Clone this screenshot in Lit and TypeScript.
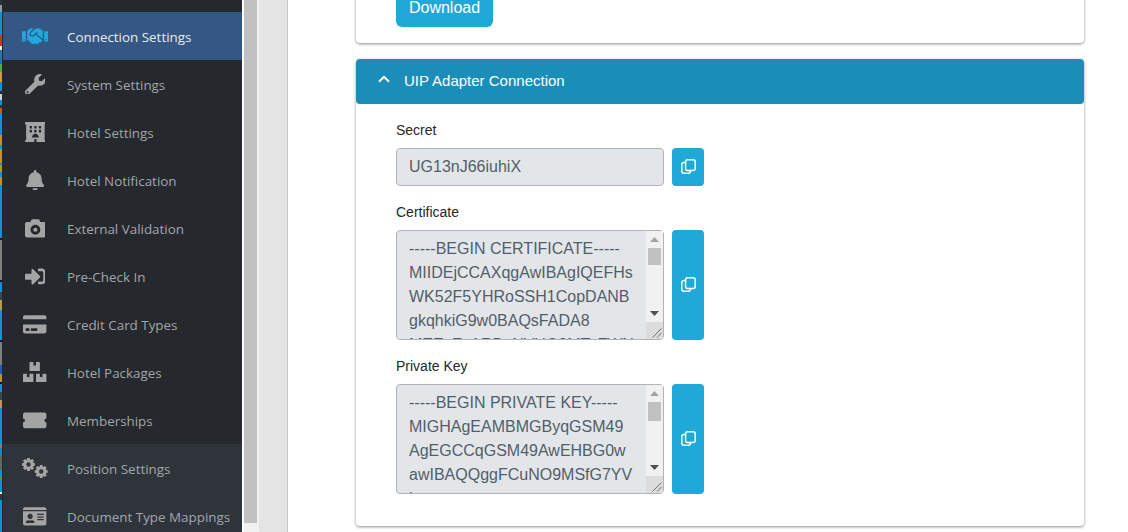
import { LitElement, html, css, svg } from "lit";
import { customElement } from "lit/decorators.js";

function gear(cx: number, cy: number, r: number, hole: number, teeth = 8): string {
  const pts: string[] = [];
  const rIn = r * 0.74;
  for (let i = 0; i < teeth; i++) {
    const a = (i / teeth) * Math.PI * 2 - Math.PI / 2;
    const s = (Math.PI / teeth) * 0.5;
    const o = (Math.PI / teeth) * 0.72;
    const list: [number, number][] = [
      [rIn, a - o * 1.25],
      [r, a - s],
      [r, a + s],
      [rIn, a + o * 1.25],
    ];
    for (const [rad, ang] of list) {
      pts.push(`${(cx + rad * Math.cos(ang)).toFixed(2)} ${(cy + rad * Math.sin(ang)).toFixed(2)}`);
    }
  }
  const ring = `M${cx - hole} ${cy}a${hole} ${hole} 0 1 0 ${hole * 2} 0a${hole} ${hole} 0 1 0 ${-hole * 2} 0z`;
  return `M${pts.join("L")}z${ring}`;
}

type Item = { label: string; vb: string; w: number; h?: number; d: string; cls?: string };

const ITEMS: Item[] = [
  { label: "Connection Settings", cls: "active", vb: "0 0 640 512", w: 26, d: "M434.7 64h-85.9c-8 0-15.7 3-21.6 8.4l-98.3 90c-.1.1-.2.3-.3.4-16.6 15.6-16.3 40.5-2.1 56 12.7 13.9 39.4 17.6 56.1 2.7.1-.1.3-.1.4-.2l79.9-73.2c6.5-5.9 16.7-5.5 22.6 1 6 6.5 5.5 16.6-1 22.6l-26.1 23.9L504 313.8c2.9 2.4 5.5 5 7.9 7.7V128l-54.6-54.6c-5.9-6-14.1-9.4-22.6-9.4zM544 128.2v223.9c0 17.7 14.3 32 32 32h64V128.2h-96zm48 223.9c-8.8 0-16-7.2-16-16s7.2-16 16-16 16 7.2 16 16-7.2 16-16 16zM0 384h64c17.7 0 32-14.3 32-32V128.2H0V384zm48-63.9c8.8 0 16 7.2 16 16s-7.2 16-16 16-16-7.2-16-16c0-8.9 7.2-16 16-16zm435.9 18.6L334.6 217.5l-30 27.5c-29.7 27.1-75.2 24.5-101.7-4.4-26.9-29.4-24.8-74.9 4.4-101.7L289.1 64h-83.8c-8.5 0-16.6 3.4-22.6 9.4L128 128v223.9h18.3l90.5 81.9c27.4 22.3 67.7 18.1 90-9.3l.2-.2 17.9 15.5c15.9 13 39.4 10.5 52.3-5.4l31.4-38.6 5.4 4.4c13.7 11.1 33.9 9.1 45-4.7l9.5-11.7c11.2-13.8 9.1-33.9-4.6-45.1z" },
  { label: "System Settings", vb: "0 0 512 512", w: 20.8, d: "M507.73 109.1c-2.24-9.03-13.54-12.09-20.12-5.51l-74.36 74.36-67.88-11.31-11.31-67.88 74.36-74.36c6.62-6.62 3.43-17.9-5.66-20.16-47.38-11.74-99.55.91-136.58 37.93-39.64 39.64-50.55 97.1-34.05 147.2L18.74 402.76c-24.99 24.99-24.99 65.51 0 90.5 24.99 24.99 65.51 24.99 90.5 0l213.21-213.21c50.12 16.71 107.47 5.68 147.37-34.22 37.07-37.07 49.7-89.32 37.91-136.73zM64 472c-13.25 0-24-10.75-24-24 0-13.26 10.75-24 24-24s24 10.74 24 24c0 13.25-10.75 24-24 24z" },
  { label: "Hotel Settings", vb: "0 0 576 512", w: 20.8, h: 20.8, d: "M560 64c8.84 0 16-7.16 16-16V16c0-8.84-7.16-16-16-16H16C7.16 0 0 7.16 0 16v32c0 8.84 7.16 16 16 16h15.98v384H16c-8.84 0-16 7.16-16 16v32c0 8.84 7.16 16 16 16h240v-80c0-8.8 7.2-16 16-16h32c8.8 0 16 7.2 16 16v80h240c8.84 0 16-7.16 16-16v-32c0-8.84-7.16-16-16-16h-16V64h16zM256 108.8c0-6.4 6.4-12.8 12.8-12.8h38.4c6.4 0 12.8 6.4 12.8 12.8v38.4c0 6.4-6.4 12.8-12.8 12.8h-38.4c-6.4 0-12.8-6.4-12.8-12.8v-38.4zm0 96c0-6.4 6.4-12.8 12.8-12.8h38.4c6.4 0 12.8 6.4 12.8 12.8v38.4c0 6.4-6.4 12.8-12.8 12.8h-38.4c-6.4 0-12.8-6.4-12.8-12.8v-38.4zm-128-96c0-6.4 6.4-12.8 12.8-12.8h38.4c6.4 0 12.8 6.4 12.8 12.8v38.4c0 6.4-6.4 12.8-12.8 12.8h-38.4c-6.4 0-12.8-6.4-12.8-12.8v-38.4zM179.2 256h-38.4c-6.4 0-12.8-6.4-12.8-12.8v-38.4c0-6.4 6.4-12.8 12.8-12.8h38.4c6.4 0 12.8 6.4 12.8 12.8v38.4c0 6.4-6.4 12.8-12.8 12.8zM192 384c0-53.02 42.98-96 96-96s96 42.98 96 96H192zm256-140.8c0 6.4-6.4 12.8-12.8 12.8h-38.4c-6.4 0-12.8-6.4-12.8-12.8v-38.4c0-6.4 6.4-12.8 12.8-12.8h38.4c6.4 0 12.8 6.4 12.8 12.8v38.4zm0-96c0 6.4-6.4 12.8-12.8 12.8h-38.4c-6.4 0-12.8-6.4-12.8-12.8v-38.4c0-6.4 6.4-12.8 12.8-12.8h38.4c6.4 0 12.8 6.4 12.8 12.8v38.4z" },
  { label: "Hotel Notification", vb: "0 0 448 512", w: 18.2, d: "M224 512c35.32 0 63.97-28.65 63.97-64H160.03c0 35.35 28.65 64 63.97 64zm215.39-149.71c-19.32-20.76-55.47-51.99-55.47-154.29 0-77.7-54.48-139.9-127.94-155.16V32c0-17.67-14.32-32-31.98-32s-31.98 14.33-31.98 32v20.84C118.56 68.1 64.08 130.3 64.08 208c0 102.3-36.15 133.53-55.47 154.29-6 6.45-8.66 14.16-8.61 21.71.11 16.4 12.98 32 32.1 32h383.8c19.12 0 32-15.6 32.1-32 .05-7.55-2.61-15.27-8.61-21.71z" },
  { label: "External Validation", vb: "0 0 512 512", w: 20.8, d: "M512 144v288c0 26.5-21.5 48-48 48H48c-26.5 0-48-21.5-48-48V144c0-26.5 21.5-48 48-48h88l12.3-32.9c7-18.7 24.9-31.1 44.9-31.1h125.5c20 0 37.9 12.4 44.9 31.1L376 96h88c26.5 0 48 21.5 48 48zM376 288c0-66.2-53.8-120-120-120s-120 53.8-120 120 53.8 120 120 120 120-53.8 120-120zm-70 0c0 27.6-22.4 50-50 50s-50-22.4-50-50 22.4-50 50-50 50 22.4 50 50z" },
  { label: "Pre-Check In", vb: "0 0 512 512", w: 20.8, d: "M416 448h-84c-6.6 0-12-5.4-12-12v-40c0-6.6 5.4-12 12-12h84c17.7 0 32-14.3 32-32V160c0-17.7-14.3-32-32-32h-84c-6.6 0-12-5.4-12-12V76c0-6.6 5.4-12 12-12h84c53 0 96 43 96 96v192c0 53-43 96-96 96zm-47-201L201 79c-15-15-41-4.5-41 17v96H24c-13.3 0-24 10.7-24 24v96c0 13.3 10.7 24 24 24h136v96c0 21.5 26 32 41 17l168-168c9.3-9.4 9.3-24.6 0-34z" },
  { label: "Credit Card Types", vb: "0 0 576 512", w: 23.4, d: "M0 432c0 26.5 21.5 48 48 48h480c26.5 0 48-21.5 48-48V256H0v176zm192-68c0-6.6 5.4-12 12-12h136c6.6 0 12 5.4 12 12v40c0 6.6-5.4 12-12 12H204c-6.6 0-12-5.4-12-12v-40zm-128 0c0-6.6 5.4-12 12-12h72c6.6 0 12 5.4 12 12v40c0 6.6-5.4 12-12 12H76c-6.6 0-12-5.4-12-12v-40zM576 80v48H0V80c0-26.5 21.5-48 48-48h480c26.5 0 48 21.5 48 48z" },
  { label: "Hotel Packages", vb: "0 0 576 512", w: 23.4, d: "M560 288h-80v96l-32-21.3-32 21.3v-96h-80c-8.8 0-16 7.2-16 16v192c0 8.8 7.2 16 16 16h224c8.8 0 16-7.2 16-16V304c0-8.8-7.2-16-16-16zm-384-64h224c8.8 0 16-7.2 16-16V16c0-8.8-7.2-16-16-16h-80v96l-32-21.3L256 96V0h-80c-8.8 0-16 7.2-16 16v192c0 8.8 7.2 16 16 16zm64 64h-80v96l-32-21.3L96 384v-96H16c-8.8 0-16 7.2-16 16v192c0 8.8 7.2 16 16 16h224c8.8 0 16-7.2 16-16V304c0-8.8-7.2-16-16-16z" },
  { label: "Memberships", vb: "0 0 576 512", w: 23.4, d: "M48 64h480c26.5 0 48 21.5 48 48v96c-26.5 0-48 21.5-48 48s21.5 48 48 48v96c0 26.5-21.5 48-48 48H48c-26.5 0-48-21.5-48-48v-96c26.5 0 48-21.5 48-48s-21.5-48-48-48v-96c0-26.5 21.5-48 48-48z" },
  { label: "Position Settings", cls: "alt", vb: "0 0 26 20", w: 26, h: 20, d: gear(6.5, 6.5, 6.6, 2.2) + gear(19.2, 13.5, 6.6, 2.2) },
  { label: "Document Type Mappings", cls: "alt", vb: "0 0 576 512", w: 23.4, d: "M528 32H48C21.5 32 0 53.5 0 80v16h576V80c0-26.5-21.5-48-48-48zM0 432c0 26.5 21.5 48 48 48h480c26.5 0 48-21.5 48-48V128H0v304zm352-232c0-4.4 3.6-8 8-8h144c4.4 0 8 3.6 8 8v16c0 4.4-3.6 8-8 8H360c-4.4 0-8-3.6-8-8v-16zm0 64c0-4.4 3.6-8 8-8h144c4.4 0 8 3.6 8 8v16c0 4.4-3.6 8-8 8H360c-4.4 0-8-3.6-8-8v-16zm0 64c0-4.4 3.6-8 8-8h144c4.4 0 8 3.6 8 8v16c0 4.4-3.6 8-8 8H360c-4.4 0-8-3.6-8-8v-16zM176 192c35.3 0 64 28.7 64 64s-28.7 64-64 64-64-28.7-64-64 28.7-64 64-64zM67.1 396.2C75.5 370.5 99.6 352 128 352h8.2c12.3 5.1 25.7 8 39.8 8s27.6-2.9 39.8-8h8.2c28.4 0 52.5 18.5 60.9 44.2 3.2 9.9-5.2 19.8-15.6 19.8H82.7c-10.4 0-18.8-10-15.6-19.8z" },
];

const CERT = [
  "-----BEGIN CERTIFICATE-----",
  "MIIDEjCCAXqgAwIBAgIQEFHs",
  "WK52F5YHRoSSH1CopDANB",
  "gkqhkiG9w0BAQsFADA8",
  "MEExEzARBgNVHG2MTyFWN",
].join("\n");

const KEY = [
  "-----BEGIN PRIVATE KEY-----",
  "MIGHAgEAMBMGByqGSM49",
  "AgEGCCqGSM49AwEHBG0w",
  "awIBAQQggFCuNO9MSfG7YV",
  "i",
].join("\n");

@customElement("app-root")
export class AppRoot extends LitElement {
  static styles = css`
    :host {
      display: flex;
      width: 1128px;
      height: 532px;
      overflow: hidden;
      background: #fff;
      font-family: "Liberation Sans", Arial, sans-serif;
      color: #23282c;
    }
    .strip {
      flex: 0 0 3px;
      background:
        linear-gradient(to right, transparent 0 2.4px, #25282d 2.4px),
        linear-gradient(
        to bottom,
        #2b3138 0 5px, #8f9aa5 5px 12px, #0a96d6 12px 35px, #c0392b 35px 46px, #e8e8e8 46px 50px,
        #2b6fc0 50px 64px, #5aa84a 64px 72px, #c9a227 72px 82px, #0a96d6 82px 91px, #2c2c2c 91px 94px,
        #d0d0d0 94px 100px, #0a96d6 100px 105px, #3a2f3a 105px 108px, #b8651d 108px 113px,
        #0a96d6 113px 135px, #c2941c 135px 145px, #0a96d6 145px 149px, #c2941c 149px 163px,
        #0a96d6 163px 165px, #c2941c 165px 172px, #0a96d6 172px 177px, #c2941c 177px 185px,
        #0a96d6 185px 238px, #111 238px 240px, #7f7f7f 240px 280px, #111 280px 282px,
        #0a96d6 282px 292px, #3d4650 292px 300px, #b89a4a 300px 310px, #0a96d6 310px 340px,
        #111 340px 342px, #7f7f7f 342px 365px, #1d5fb0 365px 374px, #b8923a 374px 382px, #111 382px 384px,
        #0a96d6 384px 392px, #3d4650 392px 400px, #b89a4a 400px 408px, #0a96d6 408px 444px,
        #7f7f7f 444px 448px, #1b84c4 448px 456px, #5d6a5e 456px 470px, #0a96d6 470px 476px,
        #4f9a55 476px 480px, #0a96d6 480px 492px, #e8e8e8 492px 494px, #2c3a48 494px 500px,
        #0a96d6 500px 532px
      );
    }
    .sidebar {
      flex: 0 0 239px;
      display: flex;
      flex-direction: column;
      background: #25282d;
      padding-top: 12px;
      overflow: hidden;
    }
    .row {
      flex: 0 0 48px;
      display: flex;
      align-items: center;
      padding-left: 19px;
      gap: 19px;
      font-family: "Open Sans", sans-serif;
      font-size: 13.4px;
      color: #a3a6a9;
      white-space: nowrap;
    }
    .row .txt { padding-top: 2px; }
    .row .ico {
      flex: 0 0 26px;
      display: flex;
      justify-content: center;
      align-items: center;
      color: #a4a4a4;
    }
    .row svg { display: block; fill: currentColor; }
    .row.active { background: #345783; color: #e6edf5; }
    .row.active .ico { color: #1fa9e0; }
    .row.alt { background: #2f343b; }
    .gutter { flex: 0 0 2px; background: #fff; }
    .vscroll {
      flex: 0 0 15px;
      background: #f1f1f1;
      display: flex;
      align-items: flex-start;
    }
    .vthumb { width: 13px; height: 523px; background: #c1c1c1; }
    .band {
      flex: 0 0 29px;
      box-sizing: border-box;
      background: #e4e4e4;
      border-right: 1px solid #c8c8c8;
    }
    .main {
      flex: 1;
      min-width: 0;
      padding: 0 44px 0 68px;
      overflow: hidden;
      background: #fff;
    }
    .card {
      background: #fff;
      border-radius: 4px;
      box-shadow: 0 1px 3px rgba(0, 0, 0, 0.45);
    }
    .card.first {
      margin-top: -30px;
      margin-bottom: 16px;
      padding: 19px 40px 16px;
    }
    .download {
      display: block;
      width: 97px;
      height: 38px;
      box-sizing: border-box;
      border: none;
      border-radius: 6px;
      background: #20a8d8;
      color: #fff;
      font: 16px "Liberation Sans", Arial, sans-serif;
      padding: 0;
    }
    .head {
      height: 45px;
      display: flex;
      align-items: center;
      gap: 14px;
      padding-left: 22px;
      background: #1a8db8;
      color: #fff;
      font-size: 15px;
      border-radius: 4px;
    }
    .head svg { display: block; margin-bottom: 6px; }
    .head span { margin-bottom: 2px; }
    .body { padding: 16px 40px 32px; }
    .group { margin-bottom: 16px; }
    .group:last-child { margin-bottom: 0; }
    label {
      display: block;
      font-size: 14px;
      line-height: 20px;
      margin-bottom: 8px;
    }
    .line { display: flex; gap: 8px; }
    .field {
      width: 268px;
      box-sizing: border-box;
      border: 1px solid #aeb4ba;
      border-radius: 4px;
      background: #e3e6e9;
      color: #525e69;
      font: 16px/24px "Liberation Sans", Arial, sans-serif;
      padding: 6px 12px;
      margin: 0;
      outline: none;
    }
    input.field { height: 38px; }
    .ta { position: relative; width: 268px; height: 110px; }
    textarea.field {
      height: 110px;
      display: block;
      resize: none;
      overflow: hidden;
      padding-right: 29px;
    }
    .sb {
      position: absolute;
      top: 1px;
      right: 1px;
      bottom: 1px;
      width: 17px;
      display: flex;
      flex-direction: column;
      background: #f1f1f1;
    }
    .sb .btn {
      flex: 0 0 17px;
      display: flex;
      align-items: center;
      justify-content: center;
    }
    .sb .btn svg, .sb .corner svg { display: block; }
    .sb .track { flex: 1; display: flex; justify-content: center; }
    .sb .thumb { width: 13px; background: #c1c1c1; }
    .sb .corner { flex: 0 0 17px; background: #dcdcdc; }
    .copy {
      flex: 0 0 32px;
      width: 32px;
      display: flex;
      align-items: center;
      justify-content: center;
      padding: 0;
      border: none;
      border-radius: 4px;
      background: #20a8d8;
      color: #fff;
    }
    .copy svg { display: block; margin-bottom: 2px; }
  `;

  private copyIcon() {
    return html`<button class="copy" aria-label="Copy">
      <svg width="15" height="15" viewBox="0 0 15 15" fill="none" stroke="#fff" stroke-width="1.5">
        <rect x="4.6" y=".8" width="9.6" height="10.6" rx="2" />
        <path d="M4.6 3.6H2.6A1.8 1.8 0 0 0 .8 5.4v7a1.8 1.8 0 0 0 1.8 1.8h5a1.8 1.8 0 0 0 1.8-1.8v-1" />
      </svg>
    </button>`;
  }

  private area(text: string, thumb: number) {
    return html`<div class="ta">
      <textarea class="field" readonly .value=${text}></textarea>
      <div class="sb" aria-hidden="true">
        <div class="btn">
          <svg width="9" height="5" viewBox="0 0 9 5"><path d="M4.5 0L9 5H0z" fill="#a3a3a3" /></svg>
        </div>
        <div class="track"><div class="thumb" style="height:${thumb}px"></div></div>
        <div class="btn">
          <svg width="9" height="5" viewBox="0 0 9 5"><path d="M0 0h9L4.5 5z" fill="#505050" /></svg>
        </div>
        <div class="corner">
          <svg width="17" height="17" viewBox="0 0 17 17" fill="none" stroke="#707070" stroke-width="1">
            <path d="M15.5 6.5L6.5 15.5M15.5 11L11 15.5" />
          </svg>
        </div>
      </div>
    </div>`;
  }

  render() {
    return html`
      <div class="strip"></div>
      <nav class="sidebar">
        ${ITEMS.map(
          (it) => html`<div class="row ${it.cls ?? ""}">
            <span class="ico">
              <svg
                viewBox=${it.vb}
                width=${it.w}
                height=${it.h ?? 20.8}
                preserveAspectRatio=${it.h ? "none" : "xMidYMid meet"}
                fill-rule="evenodd"
              >${svg`<path d=${it.d} />`}</svg>
            </span>
            <span class="txt">${it.label}</span>
          </div>`
        )}
      </nav>
      <div class="gutter"></div>
      <div class="vscroll"><div class="vthumb"></div></div>
      <div class="band"></div>
      <main class="main">
        <section class="card first">
          <button class="download">Download</button>
        </section>
        <section class="card">
          <header class="head">
            <svg width="12" height="8" viewBox="0 0 12 8" fill="none" stroke="#fff" stroke-width="2">
              <path d="M1 6.8L6 1.8L11 6.8" />
            </svg>
            <span>UIP Adapter Connection</span>
          </header>
          <div class="body">
            <div class="group">
              <label>Secret</label>
              <div class="line">
                <input class="field" readonly .value=${"UG13nJ66iuhiX"} />
                ${this.copyIcon()}
              </div>
            </div>
            <div class="group">
              <label>Certificate</label>
              <div class="line">
                ${this.area(CERT, 17)}
                ${this.copyIcon()}
              </div>
            </div>
            <div class="group">
              <label>Private Key</label>
              <div class="line">
                ${this.area(KEY, 19)}
                ${this.copyIcon()}
              </div>
            </div>
          </div>
        </section>
      </main>
    `;
  }
}
